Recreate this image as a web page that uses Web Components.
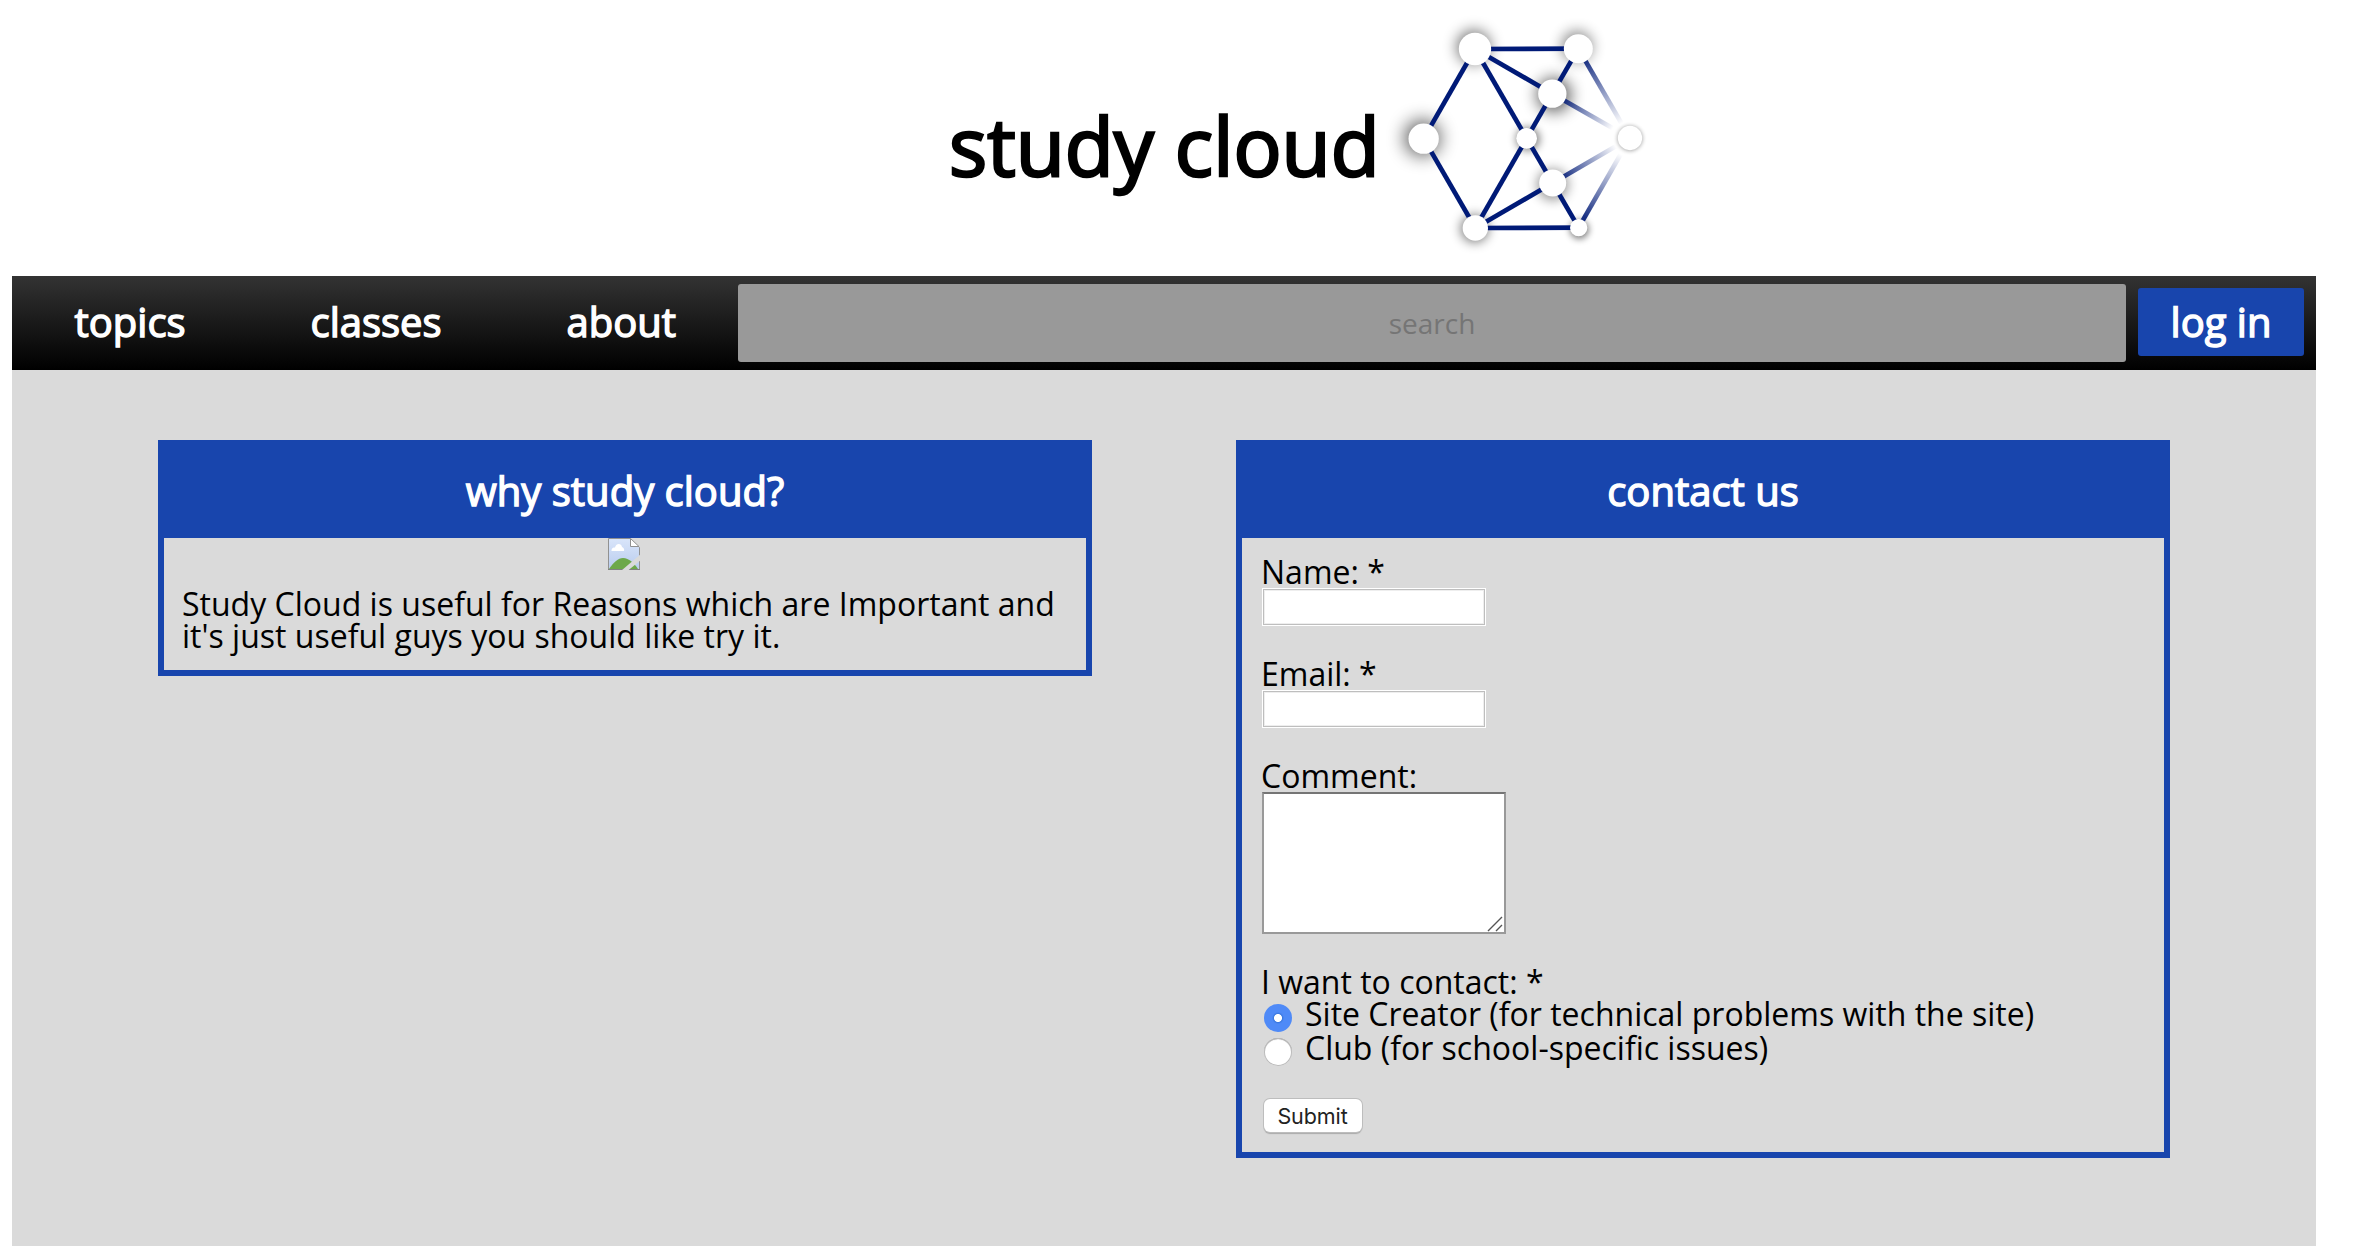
<!DOCTYPE html>
<html lang="en"><head><meta charset="utf-8"><title>study cloud</title>
<style>
html,body{margin:0;background:#fff}
body{font-family:"Open Sans",sans-serif;color:#000;width:2366px;height:1246px;overflow:hidden}
</style></head><body>
<study-page>
  <study-header slot="header">study cloud</study-header>
  <study-nav slot="nav"></study-nav>
  <study-card heading="why study cloud?"><study-about></study-about></study-card>
  <study-card heading="contact us"><contact-form></contact-form></study-card>
</study-page>
<script>
const define=(name,html,setup)=>customElements.define(name,class extends HTMLElement{
  constructor(){super();this.attachShadow({mode:'open'}).innerHTML=html;}
  connectedCallback(){if(setup)setup(this);}
});

define('study-logo',(()=>{
  const nodes=[
    [285,147,48.5,281,141,52,20,.5],[595,146,43.5,591,139,46,20,.45],[517,281,42.5,522,285,52,23,.6],
    [131,416,45.5,127,414,54,27,.62],[440,415,31,444,417,35,13,.5],[750,414,36.5,750,415,37,7,.38],
    [518,549,40.5,518,554,46,18,.42],[286,684,38,284,686,42,16,.5],[596,683,26,598,688,28,11,.55]];
  const lines=[[0,3],[3,7],[0,1],[0,2],[0,4],[4,7],[1,2],[2,4],[4,6],[6,8],[6,7],[7,8]];
  const fades=[[1,5,.84],[2,5,.78],[6,5,.82],[8,5,.82]];
  const p=i=>nodes[i];
  let s='';
  nodes.forEach((n,i)=>{s+=`<filter id="b${i}" x="-150%" y="-150%" width="400%" height="400%"><feGaussianBlur stdDeviation="${n[6]}"/></filter>`});
  fades.forEach(([a,b,e],i)=>{s+=`<linearGradient id="g${i}" gradientUnits="userSpaceOnUse" x1="${p(a)[0]}" y1="${p(a)[1]}" x2="${p(b)[0]}" y2="${p(b)[1]}"><stop offset=".12" stop-color="#001a77" stop-opacity=".9"/><stop offset="${e}" stop-color="#001a77" stop-opacity="0"/></linearGradient>`});
  s=`<defs>${s}</defs>`;
  nodes.forEach((n,i)=>{s+=`<circle cx="${n[3]}" cy="${n[4]}" r="${n[5]}" opacity="${n[7]}" filter="url(#b${i})"/>`});
  lines.forEach(([a,b])=>{s+=`<path d="M${p(a)[0]} ${p(a)[1]}L${p(b)[0]} ${p(b)[1]}" stroke="#001a77" stroke-width="14"/>`});
  fades.forEach(([a,b],i)=>{s+=`<path d="M${p(a)[0]} ${p(a)[1]}L${p(b)[0]} ${p(b)[1]}" stroke="url(#g${i})" stroke-width="14"/>`});
  nodes.forEach(n=>{s+=`<circle cx="${n[0]}" cy="${n[1]}" r="${n[2]}" fill="#fff"/>`});
  return `<style>:host{display:block;width:290px;height:270px}svg{display:block}</style><svg width="290" height="270" viewBox="0 0 870 810">${s}</svg>`;
})());

define('study-header',`<style>
:host{display:flex;height:276px;padding-left:949px;box-sizing:border-box}
h1{margin:0;width:431px;padding-top:90px;font-size:80px;line-height:109px;font-weight:400;letter-spacing:.05px;white-space:nowrap;-webkit-text-stroke:2.6px #000}
</style><h1><slot></slot></h1><study-logo></study-logo>`);

define('study-nav',`<style>
:host{display:flex;height:94px;align-items:center;background:linear-gradient(#333,#000);color:#fff;padding-right:12px;box-sizing:border-box}
a,button{font:400 40px/54px "Open Sans",sans-serif;color:#fff;-webkit-text-stroke:1.4px #fff;white-space:nowrap}
a{padding:0 0 3px 62.5px;flex:none;box-sizing:border-box}
a:nth-of-type(1){width:236px}a:nth-of-type(2){width:256px}a:nth-of-type(3){width:234px}
input{flex:1;min-width:0;height:78px;border:0;padding:0;border-radius:3px;background:#999;text-align:center;font:28px "Open Sans",sans-serif;outline:0}
input::placeholder{color:#757575;opacity:1}
button{width:166px;height:68px;margin:0 0 2px 12px;padding:0 0 1px;border:0;border-radius:3px;background:#1845ad}
</style><a>topics</a><a>classes</a><a>about</a><input placeholder="search"><button>log in</button>`);

define('study-card',`<style>
:host{display:block;box-sizing:border-box;width:934px;border:6px solid #1845ad}
h2{margin:0;height:92px;background:#1845ad;color:#fff;text-align:center;font-size:40px;line-height:90px;font-weight:400;-webkit-text-stroke:1.4px #fff}
</style><h2></h2><slot></slot>`,el=>{el.shadowRoot.querySelector('h2').textContent=el.getAttribute('heading')});

define('study-about',`<style>
:host{display:flex;flex-direction:column;align-items:center;height:132px}
svg{display:block;margin-right:2px}
p{margin:18px 0 0;width:886px;font-size:32px;line-height:32px;letter-spacing:.01px}
</style><svg width="32" height="32" viewBox="0 0 32 32">
<defs><linearGradient id="s" x2="0" y2="1"><stop stop-color="#d9e5fa"/><stop offset="1" stop-color="#b9ccee"/></linearGradient></defs>
<path d="M.5.5H22L31.500 9.500V31.500H.5Z" fill="url(#s)" stroke="#919191"/>
<path d="M1 31C6 24 10 20 15 20C21 20 26 25 30 31Z" fill="#6da84a"/>
<path d="M3.500 13C3.500 10 5 9.500 7 9.500C8 5 13.500 5 14 9C16 10 16.500 11 16 13Z" fill="#fff"/>
<path d="M22.500.5V8.500H31Z" fill="#fff" stroke="#919191"/>
<path d="M0 31.500H32" stroke="#808080"/>
<path d="M33 16V22L20 32.500H13.500Z" fill="#dadada"/></svg>
<p>Study Cloud is useful for Reasons which are Important and it's just useful guys you should like try it.</p>`);

define('contact-form',`<style>
:host{display:flex;flex-direction:column;align-items:flex-start;height:614px;padding:18px 20px 0 19px;box-sizing:border-box;font-size:32px;line-height:32px}
label{display:block;height:32px;white-space:nowrap}
input,textarea{box-sizing:border-box;margin:0 0 32px;background:#fff;outline:0;display:block}
input.t{width:224px;height:38px;margin-left:1px;border:1px solid #fff;box-shadow:inset 0 0 0 1px #bebebe,inset 0 0 0 2px #eee}
.area{position:relative;height:142px;margin:0 0 32px 1px}
textarea{width:244px;height:142px;border:2px solid #999;border-top-color:#757575;resize:none}
.area svg{position:absolute;right:3px;bottom:2px}
.r{display:flex;align-items:flex-start}
.r+.r{margin-top:2px}
.r input{appearance:none;width:28px;height:28px;margin:6px 13px 0 3px;border-radius:50%;background:#fff;box-shadow:inset 0 0 0 1px #bbb,inset 0 1px 1px #888}
.r input:checked{background:radial-gradient(circle at 50% 50%,#fff 3.6px,#3a78e0 4.4px,#4f8af7 6px);box-shadow:none}
button{margin:35px 0 0 3px;width:98px;height:33px;padding:1px 1px 0 0;border:0;border-radius:6px;background:#fff;box-shadow:0 0 0 1px #bdbdbd,0 2px 1px #aaa;font:21.500px/32px Inter,sans-serif;letter-spacing:-.1px;color:#222}
</style>
<label>Name: *</label><input class="t">
<label>Email: *</label><input class="t">
<label>Comment:</label><div class="area"><textarea></textarea><svg width="16" height="16"><path d="M1 15L15 1M9 15L15 9" stroke="#555" stroke-width="1.4"/></svg></div>
<label>I want to contact: *</label>
<label class="r"><input type="radio" name="c" checked>Site Creator (for technical problems with the site)</label>
<label class="r"><input type="radio" name="c">Club (for school-specific issues)</label>
<button>Submit</button>`);

define('study-page',`<style>
:host{display:flex;flex-direction:column;width:2366px;height:1246px}
.body{width:2304px;margin-left:12px;flex:1;display:flex;flex-direction:column;background:#dadada}
main{display:flex;align-items:flex-start;gap:144px;padding:70px 0 0 146px}
</style><slot name="header"></slot><div class="body"><slot name="nav"></slot><main><slot></slot></main></div>`);
</script></body></html>
